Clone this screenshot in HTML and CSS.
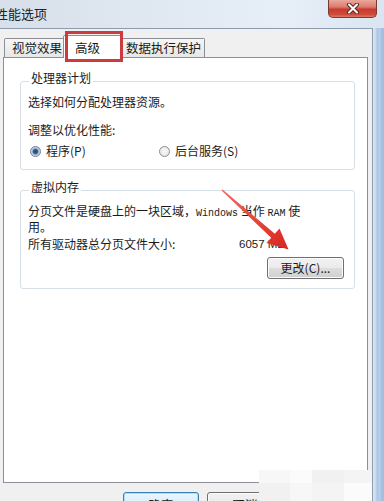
FILE: index.html
```html
<!DOCTYPE html>
<html lang="zh-CN">
<head>
<meta charset="utf-8">
<title>性能选项</title>
<link rel="stylesheet" href="styles.css">
</head>
<body>
<div class="window">
  <div class="titlebar">
    <span class="title">性能选项</span>
    <div class="close">
      <svg width="14" height="11" viewBox="0 0 14 11">
        <path d="M3 1.5 L11 9.5 M11 1.5 L3 9.5" stroke="#5a2a26" stroke-width="4" stroke-linecap="round"/>
        <path d="M3 1.5 L11 9.5 M11 1.5 L3 9.5" stroke="#ffffff" stroke-width="2" stroke-linecap="round"/>
      </svg>
    </div>
  </div>
  <div class="main">
    <div class="client">
      <div class="tabs">
        <div class="tab t1">视觉效果</div>
        <div class="tab t2 active">高级</div>
        <div class="tab t3">数据执行保护</div>
      </div>
      <div class="panel">
        <fieldset class="group g1">
          <legend>处理器计划</legend>
          <p class="line l1">选择如何分配处理器资源。</p>
          <p class="line l2">调整以优化性能:</p>
          <div class="radios">
            <label class="radio r1"><span class="dot on"></span>程序(P)</label>
            <label class="radio r2"><span class="dot"></span>后台服务(S)</label>
          </div>
        </fieldset>
        <fieldset class="group g2">
          <legend>虚拟内存</legend>
          <p class="para">分页文件是硬盘上的一块区域，<span class="mono">Windows</span> 当作 <span class="mono">RAM</span> 使<br>用。</p>
          <div class="sizerow"><span class="label">所有驱动器总分页文件大小:</span><span class="value">6057 MB</span></div>
          <div class="btnrow"><button class="btn change">更改(C)...</button></div>
        </fieldset>
      </div>
      <div class="buttons">
        <button class="btn big default">确定</button>
        <button class="btn big">取消</button>
        <button class="btn big">应用(A)</button>
      </div>
    </div>
    <div class="frame-right"></div>
  </div>
</div>

<div class="redbox"></div>

<svg class="arrow" width="384" height="501" viewBox="0 0 384 501">
  <defs>
    <linearGradient id="ag" x1="0" y1="0" x2="1" y2="1">
      <stop offset="0" stop-color="#f06a5e"/>
      <stop offset="1" stop-color="#d7261e"/>
    </linearGradient>
  </defs>
  <polygon points="221.5,190.5 271.2,237.8 266.5,243 288.5,249.5 279.5,228.6 274.8,233.8 222.5,189.5" fill="url(#ag)"/>
</svg>

<div class="mosaic">
  <span class="m a"></span><span class="m b"></span><span class="m c"></span><span class="m d"></span>
  <span class="m c"></span><span class="m a"></span><span class="m d"></span><span class="m b"></span>
</div>
</body>
</html>
```

FILE: styles.css
```css
* { box-sizing: border-box; }

body {
  margin: 0;
  width: 384px;
  height: 501px;
  overflow: hidden;
  position: relative;
  font-family: "Noto Sans CJK SC", "Noto Sans", sans-serif;
  font-size: 12px;
  color: #1b1b1b;
  background: #cfdcea;
}

.window {
  display: flex;
  flex-direction: column;
  height: 501px;
}

.titlebar {
  height: 28px;
  flex: none;
  display: flex;
  justify-content: space-between;
  align-items: flex-start;
  background: linear-gradient(90deg, #d7e0ea 0%, #e1e9f2 45%, #e6eef7 75%, #dae5f1 100%);
}

.title {
  margin: 5px 0 0 -5px;
  font-size: 13px;
  line-height: 18px;
  color: #222;
}

.close {
  width: 49px;
  height: 18px;
  margin-right: 7px;
  border: 1px solid #7a3a33;
  border-top: none;
  border-radius: 0 0 5px 5px;
  background: linear-gradient(#eaa89b 0%, #dd7d6f 40%, #c93b2d 55%, #cf4b3c 85%, #e07a68 100%);
  display: flex;
  align-items: center;
  justify-content: center;
}

.main {
  flex: 1;
  display: flex;
}

.client {
  width: 373px;
  flex: none;
  border-top: 1px solid #8e9cae;
  border-right: 1px solid #8e9cae;
  background: #f0f0f0;
  display: flex;
  flex-direction: column;
}

.frame-right {
  flex: 1;
  background: linear-gradient(90deg, #dce8f5 0px, #c6d9ee 3px, #abc5e4 4px, #b9d0ea 7px, #a7c1e2 8px, #a3bde0 100%);
}

/* tabs */
.tabs {
  display: flex;
  align-items: flex-end;
  margin: 9px 0 0 4px;
  height: 19px;
  position: relative;
  z-index: 1;
}

.tab {
  height: 19px;
  border: 1px solid #8c8f97;
  border-bottom: none;
  background: linear-gradient(#f6f6f6, #e7e7e7);
  font-size: 12.5px;
  line-height: 18px;
  white-space: nowrap;
  color: #1b1b1b;
}

.t1 { width: 62px; padding-left: 7px; border-radius: 2px 0 0 0; }
.t2 { width: 60px; padding-left: 11px; }
.t3 { width: 84px; padding-left: 4px; border-radius: 0 2px 0 0; }

.tab.active {
  height: 23px;
  margin: 0 -2px -1px -3px;
  padding-top: 3px;
  background: #ffffff;
  position: relative;
  z-index: 2;
  border-radius: 2px 2px 0 0;
}

/* panel */
.panel {
  margin-left: 3px;
  width: 365px;
  height: 426px;
  border: 1px solid #8c8f97;
  background: #ffffff;
  padding: 13px 12px 0 16px;
}

.group {
  margin: 0;
  padding: 0 9px 0 7px;
  border: 1px solid #d5dfe5;
  border-radius: 3px;
  box-shadow: inset 0 0 0 1px #ffffff;
}

.group legend {
  padding: 0 2px 6px;
  margin-left: 1px;
  font-size: 12px;
  line-height: 14px;
}

.line, .para {
  margin: 0;
  line-height: 16px;
}

.g1 { padding-bottom: 10px; }
.l1 { margin-top: 3px; }
.l2 { margin-top: 12px; }

.radios {
  display: flex;
  margin-top: 5px;
  height: 16px;
  align-items: center;
}

.radio {
  display: flex;
  align-items: center;
  line-height: 16px;
}

.r1 { width: 131px; padding-left: 2px; }

.dot {
  width: 11px;
  height: 11px;
  border-radius: 50%;
  border: 1px solid #8a8d92;
  background: radial-gradient(circle at 50% 45%, #f9f9f9 0, #e2e2e2 100%);
  margin-right: 5px;
  flex: none;
}

.dot.on {
  border-color: #6c7f96;
  background: radial-gradient(circle, #1f3f6a 0, #3f6592 2.2px, #a9bfd8 3.4px, #e3ebf4 5px);
}

.g2 {
  margin-top: 10px;
  padding-bottom: 9px;
}

.para {
  margin-top: 4px;
  line-height: 13px;
}

.mono {
  font-family: "Liberation Mono", monospace;
  font-size: 10px;
}

.sizerow {
  display: flex;
  margin-top: 3px;
  line-height: 16px;
}

.sizerow .label { width: 211px; flex: none; }
.sizerow .value { font-family: "Liberation Sans", sans-serif; font-size: 11.5px; }

.btnrow {
  display: flex;
  justify-content: flex-end;
  margin-top: 5px;
  padding-right: 1px;
}

.btn {
  font-family: "Noto Sans CJK SC", sans-serif;
  font-size: 12px;
  color: #1b1b1b;
  border: 1px solid #707070;
  border-radius: 3px;
  background: linear-gradient(#f2f2f2 0%, #ebebeb 48%, #dddddd 52%, #cfcfcf 100%);
  box-shadow: inset 0 0 0 1px #fbfbfb;
  padding: 0;
}

.change {
  width: 77px;
  height: 22px;
  line-height: 18px;
}

.buttons {
  display: flex;
  justify-content: flex-end;
  gap: 8px;
  margin-top: 9px;
  padding-right: 5px;
}

.big {
  width: 76px;
  height: 23px;
  font-size: 12.5px;
  line-height: 19px;
  padding-top: 1px;
}

.default {
  border-color: #3c7fb1;
  background: linear-gradient(#eaf6fd 0%, #d9f0fc 48%, #bee6fd 52%, #a7d9f5 100%);
  box-shadow: inset 0 0 0 1px #a6e0fb;
}

/* overlays */
.redbox {
  position: absolute;
  left: 65px;
  top: 31px;
  width: 58px;
  height: 31px;
  border: 3px solid #cc3b3d;
  z-index: 5;
}

.arrow {
  position: absolute;
  left: 0;
  top: 0;
  z-index: 6;
}

.mosaic {
  position: absolute;
  left: 259px;
  top: 470px;
  width: 113px;
  height: 31px;
  display: grid;
  grid-template-columns: 31px 22px 32px 28px;
  grid-template-rows: 13px 18px;
  z-index: 7;
}

.m.a { background: #f7f7f7; }
.m.b { background: #fbfbfb; }
.m.c { background: #f1f1f1; }
.m.d { background: #f4f4f4; }
```
